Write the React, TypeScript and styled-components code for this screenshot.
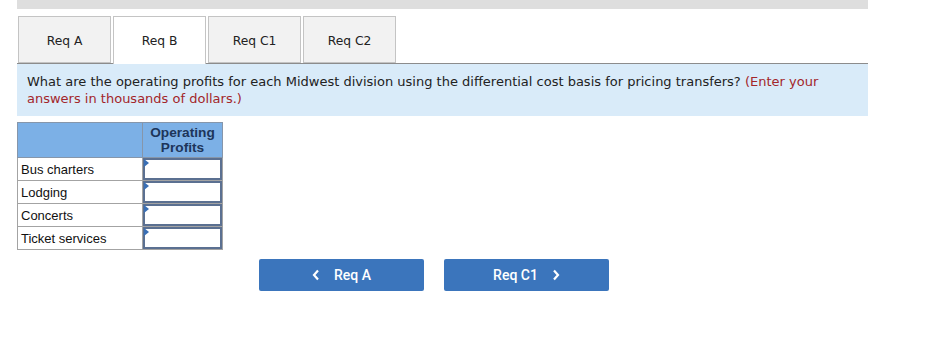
import React from "react";
import styled, { createGlobalStyle } from "styled-components";

const Global = createGlobalStyle`
  html, body { margin: 0; padding: 0; background: #fff; }
  body { font-family: "DejaVu Sans", Verdana, sans-serif; }
`;

const Page = styled.div`
  width: 851px;
  margin-left: 17px;
  display: flex;
  flex-direction: column;
  align-items: stretch;
`;

const TopBar = styled.div`
  height: 9px;
  background: #dedede;
`;

const TabRow = styled.div`
  display: flex;
  gap: 2px;
  margin-top: 7px;
  padding-left: 1px;
  border-bottom: 1px solid #8c8c8c;
  height: 47px;
  align-items: flex-start;
`;

const Tab = styled.div<{ $active?: boolean }>`
  width: 93px;
  box-sizing: border-box;
  border: 1px solid #c4c4c4;
  border-bottom: ${(p) => (p.$active ? "none" : "1px solid #c4c4c4")};
  background: ${(p) => (p.$active ? "#fff" : "#f2f2f2")};
  height: ${(p) => (p.$active ? "48px" : "47px")};
  display: flex;
  align-items: flex-start;
  justify-content: center;
  padding-top: 17px;
  font-family: "DejaVu Sans", Verdana, sans-serif;
  font-size: 12.3px;
  color: #222;
  position: relative;
  z-index: 1;
`;

const Prompt = styled.div`
  background: #d9ebf9;
  padding: 9px 10px 9px 10px;
  font-family: "DejaVu Sans", Verdana, sans-serif;
  font-size: 13px;
  line-height: 17px;
  color: #222;
  height: 52px;
  box-sizing: border-box;
`;

const Hint = styled.span`
  color: #a3262a;
`;

const Table = styled.table`
  align-self: flex-start;
  margin-top: 6px;
  border-collapse: collapse;
  table-layout: fixed;
  width: 205px;
  font-family: "Liberation Sans", Arial, sans-serif;
  font-size: 13px;
`;

const HeadCell = styled.th<{ $w: number }>`
  width: ${(p) => p.$w}px;
  box-sizing: border-box;
  background: #7cb0e6;
  border: 1px solid #8696aa;
  color: #1d355a;
  font-weight: bold;
  font-size: 13.7px;
  line-height: 15px;
  padding: 2px 0 2px;
  height: 35px;
  text-align: center;
  vertical-align: top;
`;

const LabelCell = styled.td`
  border: 1px solid #a3a3a3;
  padding: 0 3px;
  height: 22px;
  color: #111;
`;

const InputCell = styled.td`
  border: 1px solid #a3a3a3;
  padding: 0;
  height: 22px;
  position: relative;
`;

const Field = styled.div`
  box-sizing: border-box;
  height: 22px;
  border: 2px solid #5b7091;
  background: #fff;
`;

const Marker = styled.span`
  position: absolute;
  left: 1px;
  top: 1px;
  width: 0;
  height: 0;
  border-top: 4px solid transparent;
  border-bottom: 4px solid transparent;
  border-left: 5px solid #3a6fb5;
`;

const NavRow = styled.div`
  display: flex;
  gap: 20px;
  margin-top: 9px;
  margin-left: 242px;
`;

const NavButton = styled.button`
  width: 165px;
  height: 32px;
  background: #3b75bc;
  border: none;
  border-radius: 2px;
  color: #fff;
  font-family: Roboto, "Liberation Sans", sans-serif;
  font-weight: 500;
  font-size: 14px;
  display: flex;
  align-items: center;
  justify-content: center;
  gap: 14px;
  padding: 0;
`;

const Chevron = ({ dir }: { dir: "left" | "right" }) => (
  <svg width="8" height="12" viewBox="0 0 8 12">
    <path
      d={dir === "left" ? "M6 1.5 L2 6 L6 10.5" : "M2 1.5 L6 6 L2 10.5"}
      stroke="#fff"
      strokeWidth="2.2"
      fill="none"
    />
  </svg>
);

const rows = ["Bus charters", "Lodging", "Concerts", "Ticket services"];

export default function App() {
  return (
    <>
      <Global />
      <Page>
        <TopBar />
        <TabRow>
          <Tab>Req A</Tab>
          <Tab $active>Req B</Tab>
          <Tab>Req C1</Tab>
          <Tab>Req C2</Tab>
        </TabRow>
        <Prompt>
          What are the operating profits for each Midwest division using the differential cost basis for pricing transfers?{" "}
          <Hint>(Enter your answers in thousands of dollars.)</Hint>
        </Prompt>
        <Table>
          <thead>
            <tr>
              <HeadCell $w={125}></HeadCell>
              <HeadCell $w={80}>
                Operating
                <br />
                Profits
              </HeadCell>
            </tr>
          </thead>
          <tbody>
            {rows.map((r) => (
              <tr key={r}>
                <LabelCell>{r}</LabelCell>
                <InputCell>
                  <Field />
                  <Marker />
                </InputCell>
              </tr>
            ))}
          </tbody>
        </Table>
        <NavRow>
          <NavButton>
            <Chevron dir="left" />
            <span>Req A</span>
          </NavButton>
          <NavButton>
            <span>Req C1</span>
            <Chevron dir="right" />
          </NavButton>
        </NavRow>
      </Page>
    </>
  );
}
